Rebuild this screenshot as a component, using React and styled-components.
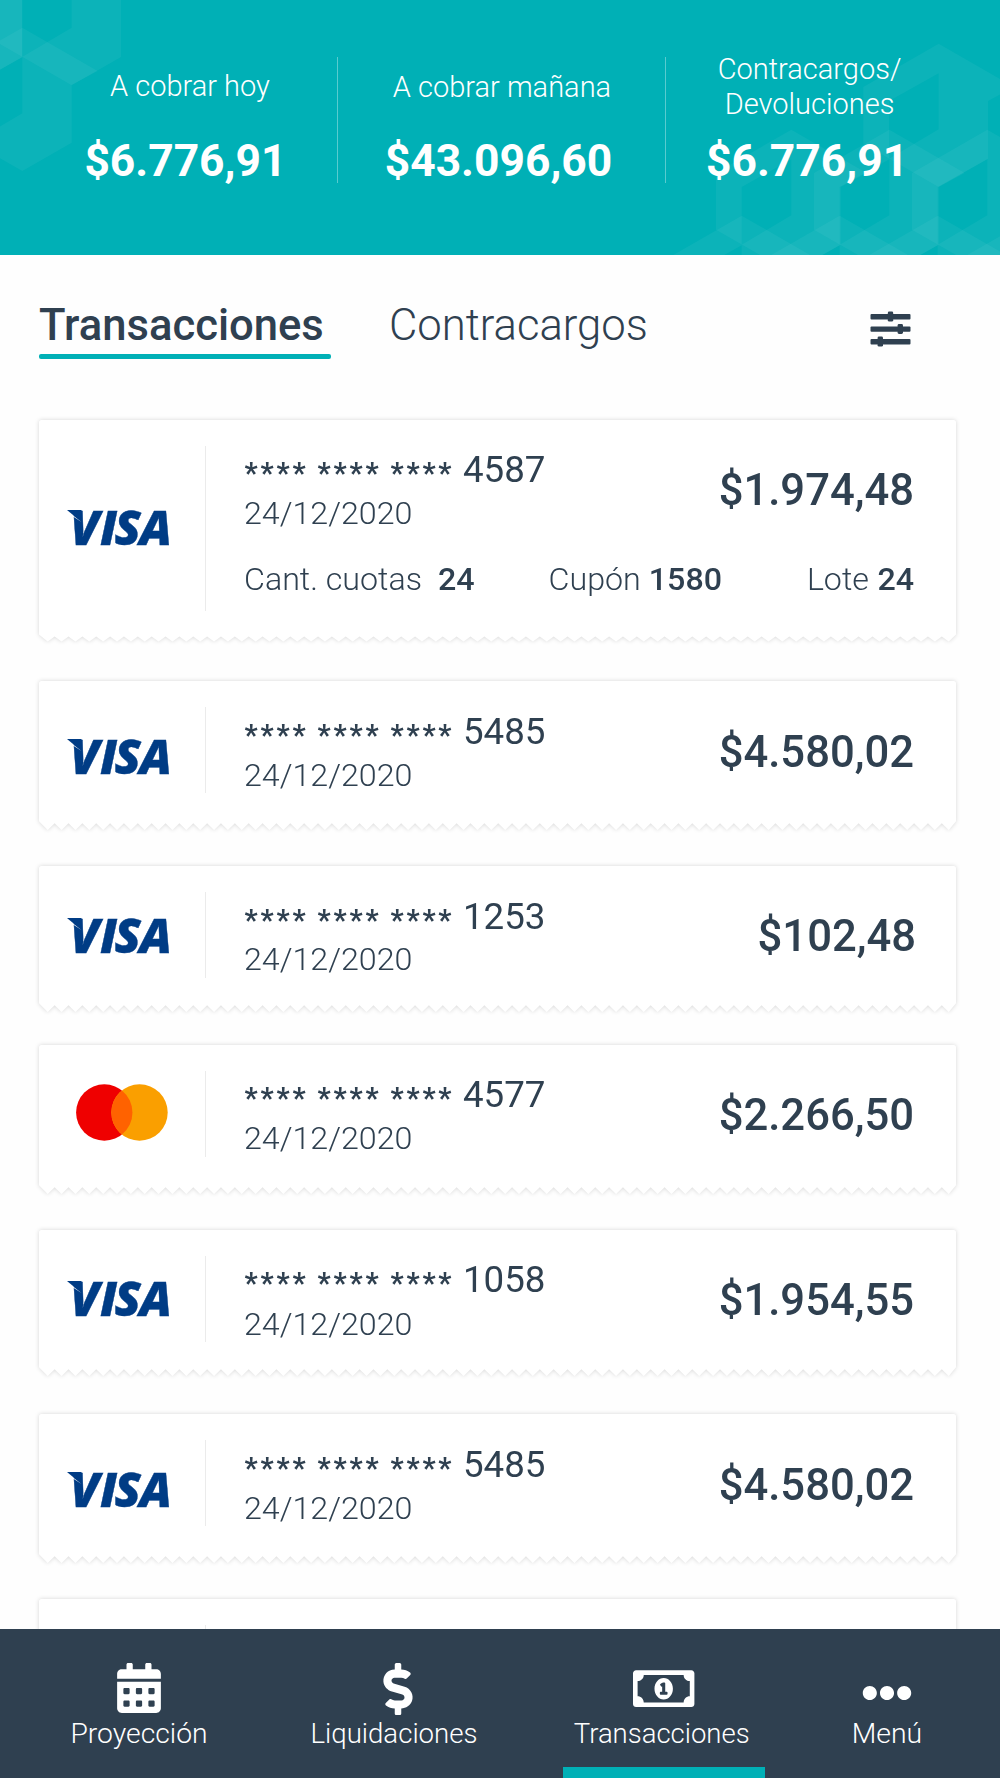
import React from "react";
import styled, { createGlobalStyle } from "styled-components";
import {
  FaCalendarAlt,
  FaDollarSign,
  FaRegMoneyBillAlt,
  FaEllipsisH,
} from "react-icons/fa";

const teal = "#00b0b6";
const navy = "#2f4050";

const GlobalStyle = createGlobalStyle`
  body {
    margin: 0;
    background: #fefefe;
    font-family: Roboto, "Liberation Sans", sans-serif;
    color: ${navy};
  }
  * {
    box-sizing: border-box;
  }
`;

const Screen = styled.div`
  display: flex;
  flex-direction: column;
  width: 1000px;
  height: 1778px;
  overflow: hidden;
`;

/* ---------- Header ---------- */

const Header = styled.header`
  position: relative;
  flex: none;
  display: flex;
  height: 255px;
  padding-top: 52px;
  background: ${teal};
  color: #fff;
`;

const Pattern = styled.svg`
  position: absolute;
  inset: 0;
`;

const Stat = styled.div`
  position: relative;
  display: flex;
  flex-direction: column;
  align-items: center;
  width: ${(p) => p.$width}px;
  padding-left: ${(p) => p.$left || 0}px;
  padding-right: ${(p) => p.$right || 0}px;
`;

const StatLabel = styled.div`
  display: flex;
  align-items: center;
  height: 70px;
  margin-left: ${(p) => p.$indent}px;
  padding-bottom: ${(p) => p.$bottom || 0}px;
  font-size: 29px;
  font-weight: 300;
  line-height: 35px;
  text-align: center;
  white-space: pre;
`;

const StatAmount = styled.div`
  margin-top: 13px;
  font-size: 44.4px;
  font-weight: 700;
  line-height: 52px;
`;

const StatDivider = styled.div`
  width: 1.5px;
  height: 126px;
  margin-top: 5px;
  background: rgba(255, 255, 255, 0.35);
`;

/* ---------- Tabs ---------- */

const Tabs = styled.nav`
  flex: none;
  display: flex;
  align-items: flex-start;
  height: 165px;
  padding: 46px 89px 0 39px;
`;

const Tab = styled.div`
  width: ${(p) => (p.$active ? "292px" : "auto")};
  height: 59px;
  margin-right: 58px;
  font-size: 43.6px;
  font-weight: ${(p) => (p.$active ? 500 : 300)};
  line-height: 50px;

  &::after {
    content: "";
    display: block;
    height: 4.5px;
    margin-top: 3px;
    border-radius: 2px;
    background: ${(p) => (p.$active ? teal : "transparent")};
  }
`;

const FilterButton = styled.div`
  margin: 10px 0 0 auto;
  line-height: 0;
`;

/* ---------- Tickets ---------- */

const List = styled.main`
  flex: 1;
  min-height: 0;
  padding-left: 39px;
  overflow: hidden;
  margin-top: -10px;
  padding-top: 10px;
`;

const TOOTH = 13.862;

// bottom edge of the receipt: 66 teeth between the straight sides
const zigzag = (height, depth) => {
  const points = ["0 0", "917px 0", `917px ${height - depth - 2}px`];
  for (let i = 65; i >= 0; i -= 1) {
    const x = 8.7 + i * TOOTH;
    points.push(`${x.toFixed(2)}px ${height}px`);
    if (i > 0) {
      points.push(`${(x - TOOTH / 2).toFixed(2)}px ${height - depth}px`);
    }
  }
  points.push(`0 ${height - depth - 2}px`);
  return `polygon(${points.join(", ")})`;
};

const Shell = styled.article`
  width: 917px;
  margin-bottom: ${(p) => p.$gap}px;
  filter: drop-shadow(0 0 2px rgba(0, 0, 0, 0.16));
`;

const Paper = styled.div`
  display: flex;
  align-items: flex-start;
  height: ${(p) => p.$height}px;
  padding-right: ${(p) => p.$right || 42}px;
  border-radius: 2.5px;
  background: #fff;
  clip-path: ${(p) => zigzag(p.$height, p.$depth)};
`;

const Brand = styled.div`
  width: 167px;
  height: ${(p) => p.$height}px;
  margin-top: 26px;
  padding: ${(p) => p.$top - 26}px 0 0 ${(p) => p.$left}px;
  border-right: 1px solid #ebebeb;
  line-height: 0;
`;

const Body = styled.div`
  flex: 1;
  padding: ${(p) => p.$top}px 0 0 38px;
`;

const Main = styled.div`
  display: flex;
  justify-content: space-between;
`;

const CardNumber = styled.div`
  display: flex;
  font-size: 36.7px;
  line-height: 42px;
`;

const Mask = styled.span`
  width: 219px;
  margin: 3px 0 -3px;
  padding-left: 0.5px;
  font-size: 29px;
  font-weight: 700;
  letter-spacing: 2.8px;
  word-spacing: -0.9px;
`;

const CardDate = styled.div`
  margin-top: ${(p) => p.$top}px;
  font-size: 32.2px;
  font-weight: 300;
  line-height: 38px;
`;

const Amount = styled.div`
  margin-top: ${(p) => p.$top}px;
  font-size: 43.6px;
  font-weight: 500;
  line-height: 50px;
`;

const Details = styled.div`
  display: flex;
  margin-top: 28px;
`;

const Detail = styled.div`
  display: flex;
  gap: ${(p) => p.$gap}px;
  margin-left: ${(p) => p.$left};
  font-size: 32.2px;
  font-weight: 300;
  line-height: 38px;

  strong {
    font-weight: 500;
  }
`;

/* ---------- Bottom bar ---------- */

const BottomBar = styled.footer`
  flex: none;
  display: grid;
  grid-template-columns: 278px 285px 202px 235px;
  height: 148.6px;
  background: ${navy};
  color: #fff;
`;

const NavItem = styled.div`
  display: flex;
  flex-direction: column;
  align-items: center;
  padding-right: ${(p) => p.$right || 0}px;
  padding-left: ${(p) => p.$left || 0}px;
  border-bottom: 11px solid ${(p) => (p.$active ? teal : "transparent")};
`;

const NavIcon = styled.div`
  display: flex;
  align-items: center;
  height: 52px;
  margin-top: 34px;
  padding-left: ${(p) => p.$left || 0}px;
  padding-top: ${(p) => p.$top || 0}px;
  padding-bottom: ${(p) => p.$bottom || 0}px;
`;

const NavLabel = styled.div`
  margin-top: 1.5px;
  padding-right: ${(p) => p.$right || 0}px;
  font-size: ${(p) => p.$size}px;
  font-weight: 300;
  line-height: 34px;
`;

/* ---------- Drawings ---------- */

const cube =
  "M0 0L226 130L148 172V345L0 430L-226 300V130ZM0 89L-149 172V345L0 257Z";

const cubes = [
  [215, -174],
  [-81, -174],
  [67, 83],
  [2816, 131],
  [2374, 389],
  [2668, 389],
  [2962, 389],
  [2225, 647],
  [2519, 647],
  [2813, 647],
  [3107, 647],
];

const HeaderPattern = () => (
  <Pattern width="1000" height="255" viewBox="0 0 3000 765">
    {cubes.map(([x, y]) => (
      <path
        key={`${x}-${y}`}
        d={cube}
        transform={`translate(${x} ${y})`}
        fill="#fff"
        fillOpacity="0.048"
        fillRule="evenodd"
      />
    ))}
  </Pattern>
);

const FilterIcon = () => (
  <svg width="41" height="36" viewBox="0 0 41 36" fill={navy}>
    <rect x="0.5" y="3" width="40" height="5.4" rx="1" />
    <rect x="0.5" y="15.4" width="40" height="5.4" rx="1" />
    <rect x="0.5" y="28" width="40" height="5.4" rx="1" />
    <rect x="17.8" y="0.6" width="5.4" height="10" rx="1.4" />
    <rect x="27.6" y="13" width="5.4" height="10" rx="1.4" />
    <rect x="7.6" y="25.6" width="5.4" height="10" rx="1.4" />
  </svg>
);

const VisaLogo = () => (
  <svg width="104" height="38" viewBox="0 0 104 38" overflow="visible">
    <text
      x="3 33 47.6 72.4"
      y="35.5"
      fill="#003c85"
      stroke="#003c85"
      strokeWidth="0.4"
      fontFamily="Open Sans"
      fontWeight="800"
      fontStyle="italic"
      fontSize="48"
    >
      VISA
    </text>
    <path d="M0 1H14.5V12L6 6Z" fill="#003c85" />
    <path d="M4.5 5.2L14.5 13L6 7.6Z" fill="#fff" />
  </svg>
);

const MastercardLogo = () => (
  <svg width="92" height="57" viewBox="0 0 92 57">
    <circle cx="28.3" cy="28.5" r="28.2" fill="#ef0000" />
    <circle cx="63.5" cy="28.5" r="28.2" fill="#fa9f00" />
    <path
      d="M45.9 6.5A28.2 28.2 0 0 1 45.9 50.5A28.2 28.2 0 0 1 45.9 6.5Z"
      fill="#ff6200"
    />
  </svg>
);

/* ---------- Data ---------- */

const transactions = [
  {
    number: "4587",
    amount: "$1.974,48",
    height: 221.5,
    depth: 5,
    gap: 39.5,
    top: 29,
    dateTop: 3,
    logoTop: 89,
    divider: 165,
    details: true,
  },
  {
    number: "5485",
    amount: "$4.580,02",
    height: 149,
    gap: 36,
    logoTop: 57,
  },
  {
    number: "1253",
    amount: "$102,48",
    height: 146,
    gap: 33,
    right: 40,
    dateTop: 2,
    amountTop: 16,
    logoTop: 51,
  },
  {
    number: "4577",
    amount: "$2.266,50",
    height: 149,
    gap: 36,
    top: 29,
    logoTop: 39.3,
    mastercard: true,
  },
  {
    number: "1058",
    amount: "$1.954,55",
    height: 146,
    gap: 38,
    top: 29,
    dateTop: 4,
    logoTop: 50,
  },
  {
    number: "5485",
    amount: "$4.580,02",
    height: 149,
    gap: 36,
    logoTop: 56.5,
  },
];

const Ticket = ({ item }) => (
  <Shell $gap={item.gap}>
    <Paper
      $height={item.height}
      $depth={item.depth || 6.7}
      $right={item.right}
    >
      <Brand
        $height={item.divider || 86}
        $top={item.logoTop}
        $left={item.mastercard ? 36.7 : 28}
      >
        {item.mastercard ? <MastercardLogo /> : <VisaLogo />}
      </Brand>
      <Body $top={item.top || 30}>
        <Main>
          <div>
            <CardNumber>
              <Mask>**** **** ****</Mask> {item.number}
            </CardNumber>
            <CardDate $top={item.dateTop || 3}>24/12/2020</CardDate>
          </div>
          <Amount $top={item.amountTop || 17}>{item.amount}</Amount>
        </Main>
        {item.details && (
          <Details>
            <Detail $gap={16} $left="0">
              Cant. cuotas <strong>24</strong>
            </Detail>
            <Detail $gap={8} $left="74px">
              Cupón <strong>1580</strong>
            </Detail>
            <Detail $gap={8.5} $left="auto">
              Lote <strong>24</strong>
            </Detail>
          </Details>
        )}
      </Body>
    </Paper>
  </Shell>
);

export default function App() {
  return (
    <Screen>
      <GlobalStyle />
      <Header>
        <HeaderPattern />
        <Stat $width={337} $left={34}>
          <StatLabel $indent={9} $bottom={2}>
            A cobrar hoy
          </StatLabel>
          <StatAmount>$6.776,91</StatAmount>
        </Stat>
        <StatDivider />
        <Stat $width={326.5} $right={6}>
          <StatLabel $indent={7}>A cobrar mañana</StatLabel>
          <StatAmount>$43.096,60</StatAmount>
        </Stat>
        <StatDivider />
        <Stat $width={334} $right={52}>
          <StatLabel $indent={5}>{"Contracargos/\nDevoluciones"}</StatLabel>
          <StatAmount>$6.776,91</StatAmount>
        </Stat>
      </Header>
      <Tabs>
        <Tab $active>Transacciones</Tab>
        <Tab>Contracargos</Tab>
        <FilterButton>
          <FilterIcon />
        </FilterButton>
      </Tabs>
      <List>
        {transactions.map((item, i) => (
          <Ticket key={i} item={item} />
        ))}
        <Shell $gap={0}>
          <Paper $height={149} $depth={6.7}>
            <Brand $height={86} $top={57} $left={28} />
          </Paper>
        </Shell>
      </List>
      <BottomBar>
        <NavItem>
          <NavIcon $bottom={2}>
            <FaCalendarAlt size={50} />
          </NavIcon>
          <NavLabel $size={28.3}>Proyección</NavLabel>
        </NavItem>
        <NavItem $right={53}>
          <NavIcon $left={8}>
            <FaDollarSign size={52} />
          </NavIcon>
          <NavLabel $size={27.6}>Liquidaciones</NavLabel>
        </NavItem>
        <NavItem $active>
          <NavIcon $bottom={2}>
            <FaRegMoneyBillAlt size={61.4} />
          </NavIcon>
          <NavLabel $size={27.5} $right={4.6}>
            Transacciones
          </NavLabel>
        </NavItem>
        <NavItem $left={9}>
          <NavIcon $top={7}>
            <FaEllipsisH size={50} />
          </NavIcon>
          <NavLabel $size={28.4}>Menú</NavLabel>
        </NavItem>
      </BottomBar>
    </Screen>
  );
}
